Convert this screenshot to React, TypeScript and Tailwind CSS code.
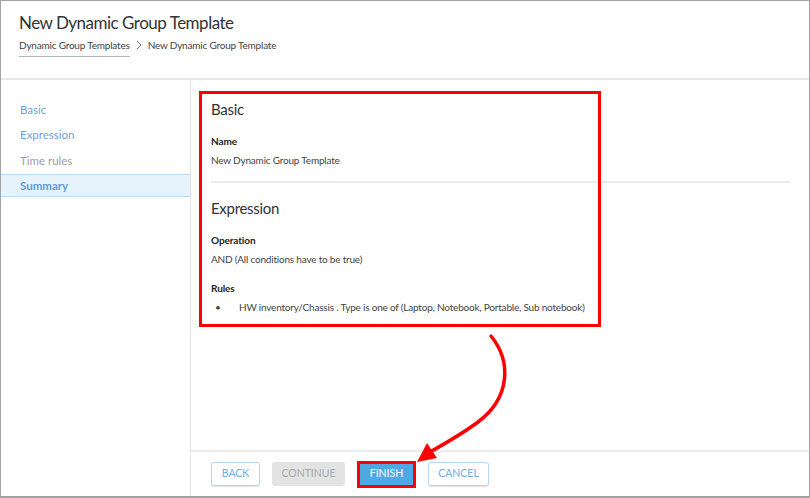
import React from 'react';

const font = { fontFamily: 'Lato, "Open Sans", sans-serif' };

function SideItem({ label, state, h = 'h-[25px]' }: { label: string; state: 'link' | 'muted' | 'active'; h?: string }) {
  if (state === 'active') {
    return (
      <div className="h-[23px] flex items-center pl-[19px] bg-[#e6f2fc] border-y border-[#bcdaf3] text-[11.5px] font-bold text-[#5c9be0]">
        {label}
      </div>
    );
  }
  return (
    <div
      className={
        h + ' flex items-center pl-[19px] text-[11.5px] ' +
        (state === 'link' ? 'text-[#6fa3e0]' : 'text-[#a0a0a0]')
      }
    >
      {label}
    </div>
  );
}

function Field({ label, value }: { label: string; value: string }) {
  return (
    <div className="flex flex-col">
      <div className="text-[10px] tracking-[-0.1px] font-bold text-[#222] leading-[14px]">{label}</div>
      <div className="text-[10px] tracking-[-0.2px] text-[#444] leading-[14px] mt-[5px]">{value}</div>
    </div>
  );
}

export default function App() {
  return (
    <div style={font} className="w-[810px] h-[498px] bg-white border border-[#a3a3a3] border-b-2 flex flex-col overflow-hidden">
      {/* header */}
      <div className="h-[79px] shrink-0 pl-[18px] pt-[11px] border-b-2 border-[#e8e8e8]">
        <h1 className="text-[17px] tracking-[-0.5px] text-[#333] leading-[22px]">New Dynamic Group Template</h1>
        <div className="flex items-center mt-[4px] text-[10px] tracking-[-0.2px] text-[#444] leading-[14px]">
          <span className="border-b border-[#b5b5b5] pb-[4px]">Dynamic Group Templates</span>
          <svg width="12" height="12" viewBox="0 0 12 12" className="mx-[3px] -mt-[6px]">
            <path d="M4 2 L8 6 L4 10" fill="none" stroke="#666" strokeWidth="1" />
          </svg>
          <span className="-mt-[5px]">New Dynamic Group Template</span>
        </div>
      </div>

      <div className="flex flex-1 min-h-0">
        {/* sidebar */}
        <div className="w-[190px] shrink-0 border-r border-[#e2e2e2] pt-[17px]">
          <SideItem label="Basic" state="link" />
          <SideItem label="Expression" state="link" />
          <SideItem label="Time rules" state="muted" h="h-[27px]" />
          <SideItem label="Summary" state="active" />
        </div>

        {/* main */}
        <div className="flex-1 flex flex-col min-w-0">
          <div className="flex-1 relative pl-[20px] pr-[19px] pt-[19px]">
            <div className="text-[15px] tracking-[-0.3px] text-[#333] leading-[20px]">Basic</div>
            <div className="mt-[15px]">
              <Field label="Name" value="New Dynamic Group Template" />
            </div>
            <div className="mt-[14px] border-t-2 border-[#ebebeb]" />
            <div className="mt-[15px] text-[15px] tracking-[-0.3px] text-[#333] leading-[20px]">Expression</div>
            <div className="mt-[15px]">
              <Field label="Operation" value="AND (All conditions have to be true)" />
            </div>
            <div className="mt-[15px] text-[10px] tracking-[-0.1px] font-bold text-[#222] leading-[14px]">Rules</div>
            <ul className="mt-[5px] text-[10px] tracking-[-0.2px] text-[#444] leading-[14px]">
              <li className="flex">
                <span className="w-[28px] pl-[4px]">•</span>
                <span>HW inventory/Chassis . Type is one of (Laptop, Notebook, Portable, Sub notebook)</span>
              </li>
            </ul>

            {/* annotation box */}
            <div className="absolute left-[8px] top-[11px] w-[402px] h-[236px] border-[3px] border-[#f00] pointer-events-none" />
          </div>

          {/* footer */}
          <div className="h-[46px] shrink-0 border-t-2 border-[#ebebeb] flex items-center gap-3 pl-[20px]">
            <button className="w-[49px] h-[24px] rounded-[3px] border border-[#b7d8f2] bg-white text-[10.5px] text-[#74ace0] shadow-[0_1px_1px_rgba(0,0,0,0.12)]">
              BACK
            </button>
            <button className="w-[73px] h-[24px] rounded-[3px] bg-[#e3e3e3] text-[10.5px] text-[#a9a9a9]">
              CONTINUE
            </button>
            <button className="w-[59px] h-[27px] border-[3px] border-[#f00] bg-[#4ea9e2] text-[10.5px] text-white">
              FINISH
            </button>
            <button className="w-[61px] h-[24px] rounded-[3px] border border-[#b7d8f2] bg-white text-[10.5px] text-[#74ace0] shadow-[0_1px_1px_rgba(0,0,0,0.12)]">
              CANCEL
            </button>
          </div>
        </div>
      </div>

      {/* curved arrow annotation */}
      <svg className="absolute left-0 top-0 pointer-events-none" width="810" height="498" viewBox="0 0 810 498">
        <path d="M491 336 C512 362 510 398 478 422 C462 434 446 443 430 452" fill="none" stroke="#f00" strokeWidth="3.5" strokeLinecap="round" />
        <path d="M417 462 L427 443 L437 458 Z" fill="#f00" />
      </svg>
    </div>
  );
}
